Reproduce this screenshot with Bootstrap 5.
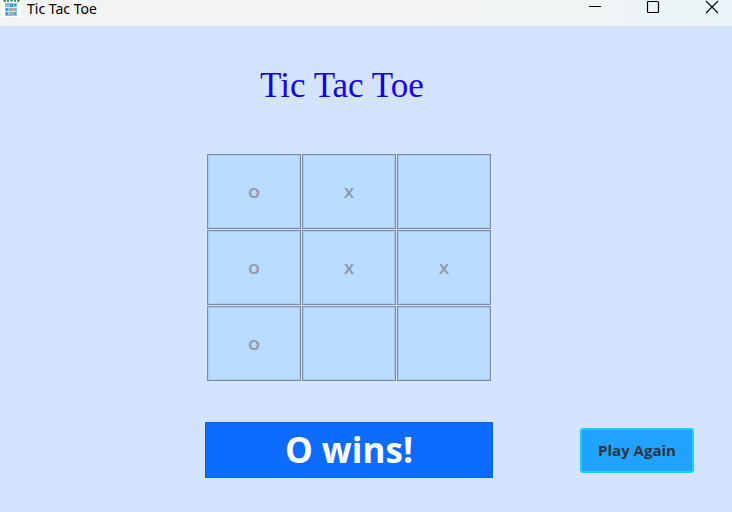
<!DOCTYPE html>
<html lang="en">
<head>
<meta charset="utf-8">
<meta name="viewport" content="width=device-width, initial-scale=1">
<title>Tic Tac Toe</title>
<link href="https://cdn.jsdelivr.net/npm/bootstrap@5.3.0/dist/css/bootstrap.min.css" rel="stylesheet">
<style>
body { background: #d4e3ff; font-family: "Open Sans", "Noto Sans", sans-serif; }
.titlebar { height: 26px; background: linear-gradient(90deg, #f3f3f2 0%, #f1f4f4 75%, #eaf4f8 100%); font-family: "Noto Sans", sans-serif; font-size: 14px; line-height: 18px; color: #000; }
.app-icon { margin-right: 5px; }
.win-btn { width: 58px; height: 14px; color: #000; line-height: 0; }
.win-btn:last-child { width: 40px; margin-left: 10px; }
.game { display: grid; grid-template-columns: 6fr 288px 7fr; }
.game-title { font-family: Georgia, "Liberation Serif", serif; font-size: 35px; line-height: 40px; color: #1400ff; margin: 40px 14px 48px 0; }
.board { display: grid; grid-template-columns: repeat(3, 1fr); gap: 1px; padding: 0 2px; margin-bottom: 41px; }
.square { height: 75px; padding: 0; background: #badcff; border: 1px solid #7f8ba0; box-shadow: inset 0 0 0 1px #adcbed; color: #919bad; font-weight: 700; font-size: 15px; line-height: 20px; }
.square:disabled { opacity: 1; color: #919bad; }
.result { height: 56px; background: #0d6bff; border: 1px solid #0560f5; color: #fff; font-size: 35px; line-height: 40px; font-weight: 700; }
.replay { width: 114px; height: 45px; margin: 0 38px 5px 0; padding: 0 0 2px; background: #22a2ff; border: 2px solid #18d0ff; border-radius: 3px; color: #29363f; font-size: 15px; line-height: 20px; font-weight: 700; }
.replay:hover { background: #1896f2; border-color: #18d0ff; color: #29363f; }
</style>
<script defer src="https://cdn.jsdelivr.net/npm/bootstrap@5.3.0/dist/js/bootstrap.bundle.min.js"></script>
</head>
<body>
<header class="titlebar d-flex align-items-start">
  <svg class="app-icon" width="22" height="17" viewBox="0 0 22 17" aria-hidden="true">
    <path fill="#fff" d="M1 0h20v17H1z"/>
    <path fill="#479675" d="M3 0h3v1H3zM7 0h2v2H7zM10 0h3v1h-3zM14 0h2v2h-2zM17 0h3v1h-3zM4 1h2v1H4zM11 1h1v1h-1zM17 1h2v1h-2z"/>
    <path fill="#7fc3f7" d="M5 3h12v13H5z"/>
    <path fill="#d3e9fa" d="M5 7h12v1H5zM5 11h12v1H5z"/>
    <path fill="#3d9fe6" d="M10 4h3v3h-3zM6 8h2v3H6zM14 4h2v2h-2zM6 12h2v3H6zM14 12h2v3h-2z"/>
    <path fill="#b9a191" d="M6 4h2v2H6zM10 8h3v3h-3zM14 8h2v3h-2zM10 12h3v3h-3z"/>
  </svg>
  <span>Tic Tac Toe</span>
  <div class="d-flex ms-auto">
    <button type="button" class="win-btn btn p-0 border-0 rounded-0" aria-label="Minimize"><svg width="14" height="14" viewBox="0 0 14 14"><path d="M1 6.5h12" stroke="#000"/></svg></button>
    <button type="button" class="win-btn btn p-0 border-0 rounded-0" aria-label="Maximize"><svg width="14" height="14" viewBox="0 0 14 14"><rect x="1.5" y="1.5" width="11" height="11" rx="1" fill="none" stroke="#000" stroke-width="1.2"/></svg></button>
    <button type="button" class="win-btn btn p-0 border-0 rounded-0" aria-label="Close"><svg width="14" height="14" viewBox="0 0 14 14"><path d="M1 1l12 12M13 1L1 13" stroke="#000" stroke-width="1.1"/></svg></button>
  </div>
</header>
<main class="game">
  <div></div>
  <div>
    <h1 class="game-title text-center fw-normal">Tic Tac Toe</h1>
    <div class="board" role="group" aria-label="Board">
      <button type="button" class="square" disabled>O</button>
      <button type="button" class="square" disabled>X</button>
      <button type="button" class="square" disabled aria-label="Empty"></button>
      <button type="button" class="square" disabled>O</button>
      <button type="button" class="square" disabled>X</button>
      <button type="button" class="square" disabled>X</button>
      <button type="button" class="square" disabled>O</button>
      <button type="button" class="square" disabled aria-label="Empty"></button>
      <button type="button" class="square" disabled aria-label="Empty"></button>
    </div>
    <div class="result d-flex align-items-center justify-content-center" role="status">O wins!</div>
  </div>
  <div class="d-flex align-items-end justify-content-end">
    <button type="button" class="replay btn">Play Again</button>
  </div>
</main>
</body>
</html>
